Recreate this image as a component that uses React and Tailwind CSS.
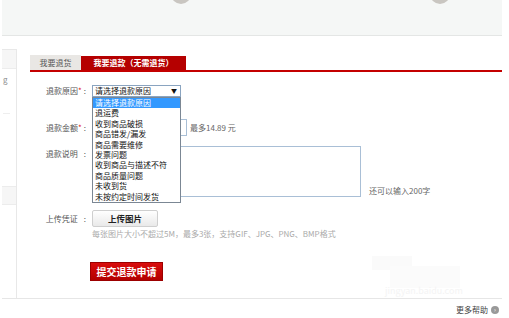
const reasons = [
  '请选择退款原因',
  '退运费',
  '收到商品破损',
  '商品错发/漏发',
  '商品需要维修',
  '发票问题',
  '收到商品与描述不符',
  '商品质量问题',
  '未收到货',
  '未按约定时间发货',
]

const Label = ({ text, required, top }) => (
  <div className={`w-[58px] shrink-0 pr-[2px] text-right text-[8px] leading-[10px] text-[#555] ${top ? 'self-start pt-[3px]' : ''}`}>
    {text}
    {required ? <span className="text-[#e02020]">*</span> : <span className="inline-block w-[4px]" />}
    <span className="ml-[2px]">:</span>
  </div>
)

export default function App() {
  return (
    <div className="relative h-[318px] w-[509px] overflow-hidden bg-white font-['Noto_Sans_CJK_SC','Noto_Sans',sans-serif]">
      <div className="relative mx-[2px] h-[36px] w-[500px] overflow-hidden border-b border-[#e4e6e5] bg-[#f5f7f6]">
        <div className="absolute left-[169px] top-[-16px] h-[20px] w-[20px] rounded-full bg-[#c9c6c1]" />
        <div className="absolute left-[428px] top-[-16px] h-[20px] w-[20px] rounded-full bg-[#c9c6c1]" />
      </div>

      <div className="mx-[2px] flex h-[263px] w-[500px] border-b border-[#e6e6e6]">
        <div className="mt-[13px] flex w-[15px] shrink-0 flex-col border-r border-t border-[#e8e8e8]">
          <div className="h-[19px] border-b border-[#ececec] bg-[#f6f6f6]" />
          <div className="mt-[6px] pl-[1px] text-[8px] leading-[10px] text-[#888]">g</div>
          <div className="ml-[1px] mt-[28px] h-px w-[7px] bg-[#eee]" />
          <div className="mt-[72px] h-[19px] border-y border-[#ececec] bg-[#f6f6f6]" />
        </div>

        <div className="flex-1 pl-[13px] pt-[19px]">
          <div className="flex items-end border-b-2 border-[#c40000]">
            <div className="flex h-[15px] w-[51px] items-center justify-center bg-[#e9e7e4] text-[8px] text-[#555]">我要退货</div>
            <div className="flex h-[14px] w-[105px] items-center justify-center bg-[#b50000] text-[8px] font-bold text-white">我要退款（无需退货）</div>
          </div>

          <div className="mt-[13px] flex h-[12px] items-center">
            <Label text="退款原因" required />
            <div className="relative ml-[4px]">
              <div className="flex h-[12px] w-[89px] items-center justify-between border border-[#8aa4c0] bg-white pl-[2px] pr-[3px] text-[8px] leading-none text-[#111]">
                <span>请选择退款原因</span>
                <span className="text-[6px]">▼</span>
              </div>
              <div className="absolute left-0 top-[12px] z-10 w-[89px] border border-[#7b8794] bg-white">
                {reasons.map((r, i) => (
                  <div
                    key={r}
                    className={`h-[10.4px] pl-[2px] text-[8px] leading-[10.4px] ${i === 0 ? 'bg-[#3399ff] text-white' : 'text-[#111]'}`}
                  >
                    {r}
                  </div>
                ))}
              </div>
            </div>
          </div>

          <div className="mt-[22px] flex h-[17px] items-center">
            <Label text="退款金额" required />
            <div className="ml-[4px] h-[17px] w-[95px] border border-[#a9bfd6] bg-white" />
            <span className="ml-[3px] text-[8px] text-[#666]">最多14.89 元</span>
          </div>

          <div className="mt-[10px] flex items-end">
            <Label text="退款说明" top />
            <div className="ml-[4px] h-[51px] w-[269px] border border-[#a9bfd6] bg-white" />
            <span className="mb-[1px] ml-[8px] text-[8px] leading-[10px] text-[#666]">还可以输入200字</span>
          </div>

          <div className="mt-[13px] flex h-[17px] items-center">
            <Label text="上传凭证" />
            <div className="ml-[4px] flex h-[17px] w-[66px] items-center justify-center rounded-[2px] border border-[#cfcfcf] bg-gradient-to-b from-[#ffffff] to-[#e9e9e9] text-[8.5px] font-bold text-[#222]">
              上传图片
            </div>
          </div>
          <div className="ml-[62px] mt-[2px] text-[8px] leading-[10px] text-[#aaa]">每张图片大小不超过5M，最多3张，支持GIF、JPG、PNG、BMP格式</div>

          <div className="ml-[60px] mt-[23px] flex h-[19px] w-[73px] items-center justify-center border border-[#9c0000] bg-gradient-to-b from-[#d90d0d] to-[#b30000] text-[10px] font-bold text-white">
            提交退款申请
          </div>
        </div>
      </div>

      <div className="absolute left-[372px] top-[256px] h-[14px] w-[40px] bg-[#fafafa]" />
      <div className="absolute left-[390px] top-[266px] h-[22px] w-[70px] bg-[#fbfbfb]" />
      <div className="absolute left-[385px] top-[286px] text-[9px] leading-none text-[#f4f4f4]">jingyan.baidu.com</div>

      <div className="flex justify-end pr-[10px] pt-[6px]">
        <span className="text-[8px] leading-[10px] text-[#444]">更多帮助</span>
        <span className="ml-[3px] mt-[1px] flex h-[8px] w-[8px] items-center justify-center rounded-full bg-[#999] text-[6px] leading-none text-white">›</span>
      </div>
    </div>
  )
}
